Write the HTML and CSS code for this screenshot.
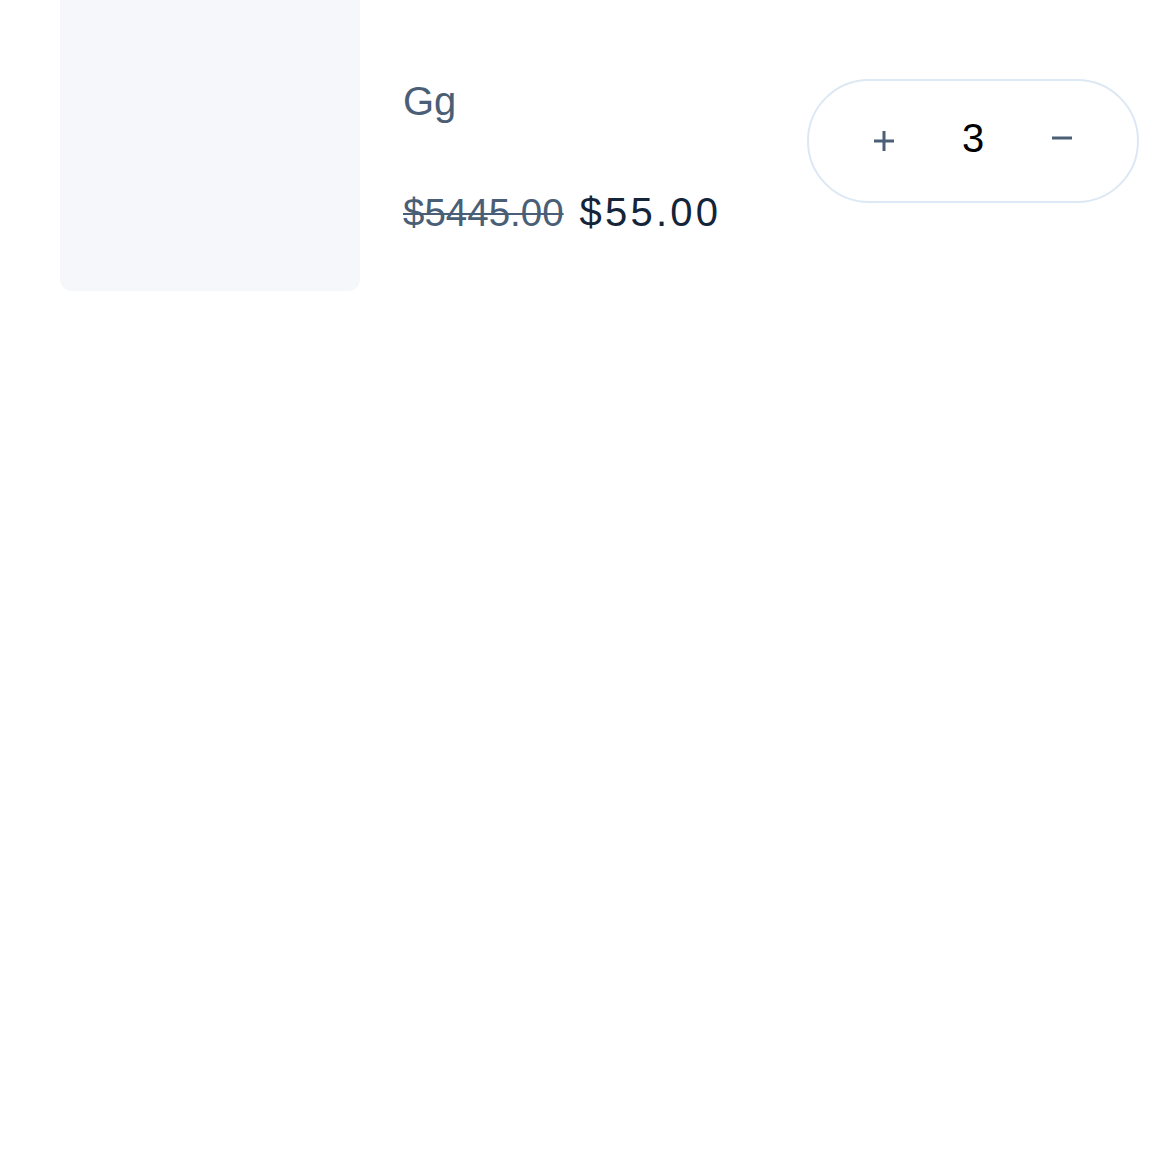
FILE: index.html
```html
<!DOCTYPE html>
<html lang="en">
<head>
<meta charset="utf-8">
<title>Cart item</title>
<link rel="stylesheet" href="styles.css">
</head>
<body>
<div class="cart-item">
  <div class="thumb"></div>
  <div class="info">
    <div class="name">Gg</div>
    <div class="prices">
      <span class="old-price">$5445.00</span>
      <span class="price">$55.00</span>
    </div>
  </div>
  <div class="qty">
    <button class="qty-btn" aria-label="Increase">
      <svg width="22" height="22" viewBox="0 0 22 22"><path d="M11 1v20M1 11h20" stroke="#4b5f77" stroke-width="3" fill="none"/></svg>
    </button>
    <span class="qty-value">3</span>
    <button class="qty-btn minus" aria-label="Decrease">
      <svg width="22" height="22" viewBox="0 0 22 22"><path d="M1 8h20" stroke="#4b5f77" stroke-width="3" fill="none"/></svg>
    </button>
  </div>
</div>
</body>
</html>
```
FILE: styles.css
```css
html, body {
  margin: 0;
  padding: 0;
  background: #ffffff;
}
body {
  font-family: "Liberation Sans", Arial, sans-serif;
  overflow: hidden;
}
.cart-item {
  display: flex;
  align-items: flex-start;
  margin-top: -9px;
  padding: 0 31px 0 60px;
}
.thumb {
  flex: none;
  width: 300px;
  height: 300px;
  background: #f6f7fb;
  border-radius: 12px;
}
.info {
  display: flex;
  flex-direction: column;
  margin-left: 43px;
  padding-top: 87px;
}
.name {
  font-size: 40px;
  line-height: 46px;
  color: #4a5e76;
}
.prices {
  display: flex;
  align-items: baseline;
  gap: 16px;
  margin-top: 66px;
  line-height: 45px;
}
.old-price {
  font-size: 38.5px;
  color: #4a5e76;
  text-decoration: line-through;
  text-decoration-thickness: 2px;
}
.price {
  font-size: 40px;
  color: #14253a;
  letter-spacing: 3.2px;
}
.qty {
  flex: none;
  margin-left: auto;
  margin-top: 88px;
  box-sizing: border-box;
  width: 332px;
  height: 124px;
  border: 2px solid #dce8f4;
  border-radius: 62px;
  display: flex;
  align-items: center;
  justify-content: center;
}
.qty-btn {
  width: 89px;
  height: 40px;
  padding: 0;
  border: none;
  background: none;
  display: flex;
  align-items: center;
  justify-content: center;
}
.qty-value {
  width: 89px;
  text-align: center;
  font-size: 40px;
  line-height: 46px;
  color: #000000;
  margin-top: -6px;
}
```
